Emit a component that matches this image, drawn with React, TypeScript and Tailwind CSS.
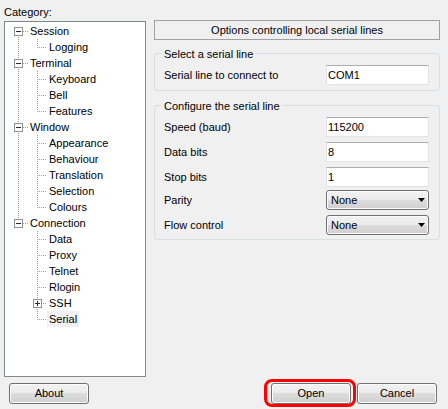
import type { ReactNode } from 'react'

type TreeNode = {
  label: string
  level: 1 | 2
  toggle?: 'minus' | 'plus'
  first?: boolean
  lastTop?: boolean
  last?: boolean
  cont?: boolean
  selected?: boolean
}

const tree: TreeNode[] = [
  { label: 'Session', level: 1, toggle: 'minus', first: true },
  { label: 'Logging', level: 2, last: true, cont: true },
  { label: 'Terminal', level: 1, toggle: 'minus' },
  { label: 'Keyboard', level: 2, cont: true },
  { label: 'Bell', level: 2, cont: true },
  { label: 'Features', level: 2, last: true, cont: true },
  { label: 'Window', level: 1, toggle: 'minus' },
  { label: 'Appearance', level: 2, cont: true },
  { label: 'Behaviour', level: 2, cont: true },
  { label: 'Translation', level: 2, cont: true },
  { label: 'Selection', level: 2, cont: true },
  { label: 'Colours', level: 2, last: true, cont: true },
  { label: 'Connection', level: 1, toggle: 'minus', lastTop: true },
  { label: 'Data', level: 2 },
  { label: 'Proxy', level: 2 },
  { label: 'Telnet', level: 2 },
  { label: 'Rlogin', level: 2 },
  { label: 'SSH', level: 2, toggle: 'plus' },
  { label: 'Serial', level: 2, last: true, selected: true },
]

const dot = { stroke: '#a0a0a0', strokeDasharray: '1 1', shapeRendering: 'crispEdges' as const }

function ToggleBox({ x, plus }: { x: number; plus?: boolean }) {
  return (
    <g shapeRendering="crispEdges">
      <rect x={x + 0.5} y={4.5} width={8} height={8} fill="#fff" stroke="#919191" />
      <line x1={x + 2} x2={x + 7} y1={8.5} y2={8.5} stroke="#2b2b2b" />
      {plus && <line x1={x + 4.5} x2={x + 4.5} y1={6} y2={11} stroke="#2b2b2b" />}
    </g>
  )
}

function TreeRow({ node }: { node: TreeNode }) {
  let lines: ReactNode
  if (node.level === 1) {
    lines = (
      <svg width={23} height={16} className="shrink-0">
        {!node.first && <line x1={13.5} x2={13.5} y1={0} y2={4} {...dot} />}
        {!node.lastTop && <line x1={13.5} x2={13.5} y1={14} y2={16} {...dot} />}
        <line x1={18} x2={23} y1={8.5} y2={8.5} {...dot} />
        <ToggleBox x={9} />
      </svg>
    )
  } else {
    lines = (
      <svg width={42} height={16} className="shrink-0">
        {node.cont && <line x1={13.5} x2={13.5} y1={0} y2={16} {...dot} />}
        {node.toggle ? (
          <>
            <line x1={32.5} x2={32.5} y1={0} y2={4} {...dot} />
            {!node.last && <line x1={32.5} x2={32.5} y1={14} y2={16} {...dot} />}
            <line x1={38} x2={42} y1={8.5} y2={8.5} {...dot} />
            <ToggleBox x={28} plus />
          </>
        ) : (
          <>
            <line x1={32.5} x2={32.5} y1={0} y2={node.last ? 9 : 16} {...dot} />
            <line x1={34} x2={42} y1={8.5} y2={8.5} {...dot} />
          </>
        )}
      </svg>
    )
  }
  return (
    <div className="flex h-[16px] items-center">
      {lines}
      <span className={`px-[2px] leading-[16px] whitespace-nowrap ${node.selected ? 'bg-[#f0f0f0]' : ''}`}>
        {node.label}
      </span>
    </div>
  )
}

function TextField({ value }: { value: string }) {
  return (
    <div className="flex h-[20px] w-[103px] items-center border border-[#e2e3ea] border-t-[#abadb3] bg-white pl-[1px]">
      {value}
    </div>
  )
}

function Dropdown({ value }: { value: string }) {
  return (
    <div className="flex h-[20px] w-[103px] items-center justify-between rounded-[3px] border border-[#707070] bg-[linear-gradient(to_bottom,#f2f2f2_0%,#ebebeb_50%,#dddddd_50%,#cfcfcf_100%)] pl-[4px] pr-[3px] shadow-[inset_0_0_0_1px_#fcfcfc]">
      <span>{value}</span>
      <svg width={7} height={4} viewBox="0 0 7 4">
        <path d="M0 0h7L3.5 4z" fill="#000" />
      </svg>
    </div>
  )
}

function Field({ label, children, className = '' }: { label: string; children: ReactNode; className?: string }) {
  return (
    <div className={`flex items-center justify-between ${className}`}>
      <span>{label}</span>
      {children}
    </div>
  )
}

function Group({ title, children, className = '' }: { title: string; children: ReactNode; className?: string }) {
  return (
    <div className={`rounded-[3px] border border-[#d5dfe5] pl-[9px] pr-[10px] ${className}`}>
      <span className="-mt-[7px] -ml-[2px] block w-fit bg-[#f0f0f0] px-[2px] leading-[14px]">{title}</span>
      {children}
    </div>
  )
}

function Button({ children }: { children: ReactNode }) {
  return (
    <button className="flex h-[21px] w-[80px] items-center justify-center rounded-[3px] border border-[#707070] bg-[linear-gradient(to_bottom,#f2f2f2_0%,#ebebeb_50%,#dddddd_50%,#cfcfcf_100%)] shadow-[inset_0_0_0_1px_#fcfcfc]">
      {children}
    </button>
  )
}

export default function App() {
  return (
    <div className="h-[409px] w-[448px] overflow-hidden bg-[#f0f0f0] font-['Liberation_Sans',Arial,sans-serif] text-[11px] text-black">
      <div className="flex pl-[4px]">
        <div className="flex w-[142px] flex-col">
          <div className="h-[21px] pt-[6px] leading-[13px]">Category:</div>
          <div className="h-[356px] border border-[#828790] bg-white pt-[1px]">
            {tree.map((node) => (
              <TreeRow key={node.label} node={node} />
            ))}
          </div>
        </div>

        <div className="ml-[8px] flex w-[286px] flex-col pt-[20px]">
          <div className="h-[20px] border border-[#a0a0a0] text-center leading-[18px]">
            Options controlling local serial lines
          </div>

          <Group title="Select a serial line" className="mt-[13px] pb-[5px]">
            <Field label="Serial line to connect to" className="mt-[4px]">
              <TextField value="COM1" />
            </Field>
          </Group>

          <Group title="Configure the serial line" className="mt-[14px] pb-[4px]">
            <Field label="Speed (baud)" className="mt-[4px]">
              <TextField value="115200" />
            </Field>
            <Field label="Data bits" className="mt-[5px]">
              <TextField value="8" />
            </Field>
            <Field label="Stop bits" className="mt-[5px]">
              <TextField value="1" />
            </Field>
            <Field label="Parity" className="mt-[3px]">
              <Dropdown value="None" />
            </Field>
            <Field label="Flow control" className="mt-[5px]">
              <Dropdown value="None" />
            </Field>
          </Group>
        </div>
      </div>

      <div className="mt-[6px] flex pl-[9px] pr-[11px]">
        <Button>About</Button>
        <div className="flex-1" />
        <div className="relative">
          <Button>Open</Button>
          <span className="pointer-events-none absolute -top-[4px] -right-[5px] -bottom-[3px] -left-[7px] rounded-[8px] border-[3px] border-[#ff0000]" />
        </div>
        <div className="ml-[6px]">
          <Button>Cancel</Button>
        </div>
      </div>
    </div>
  )
}
